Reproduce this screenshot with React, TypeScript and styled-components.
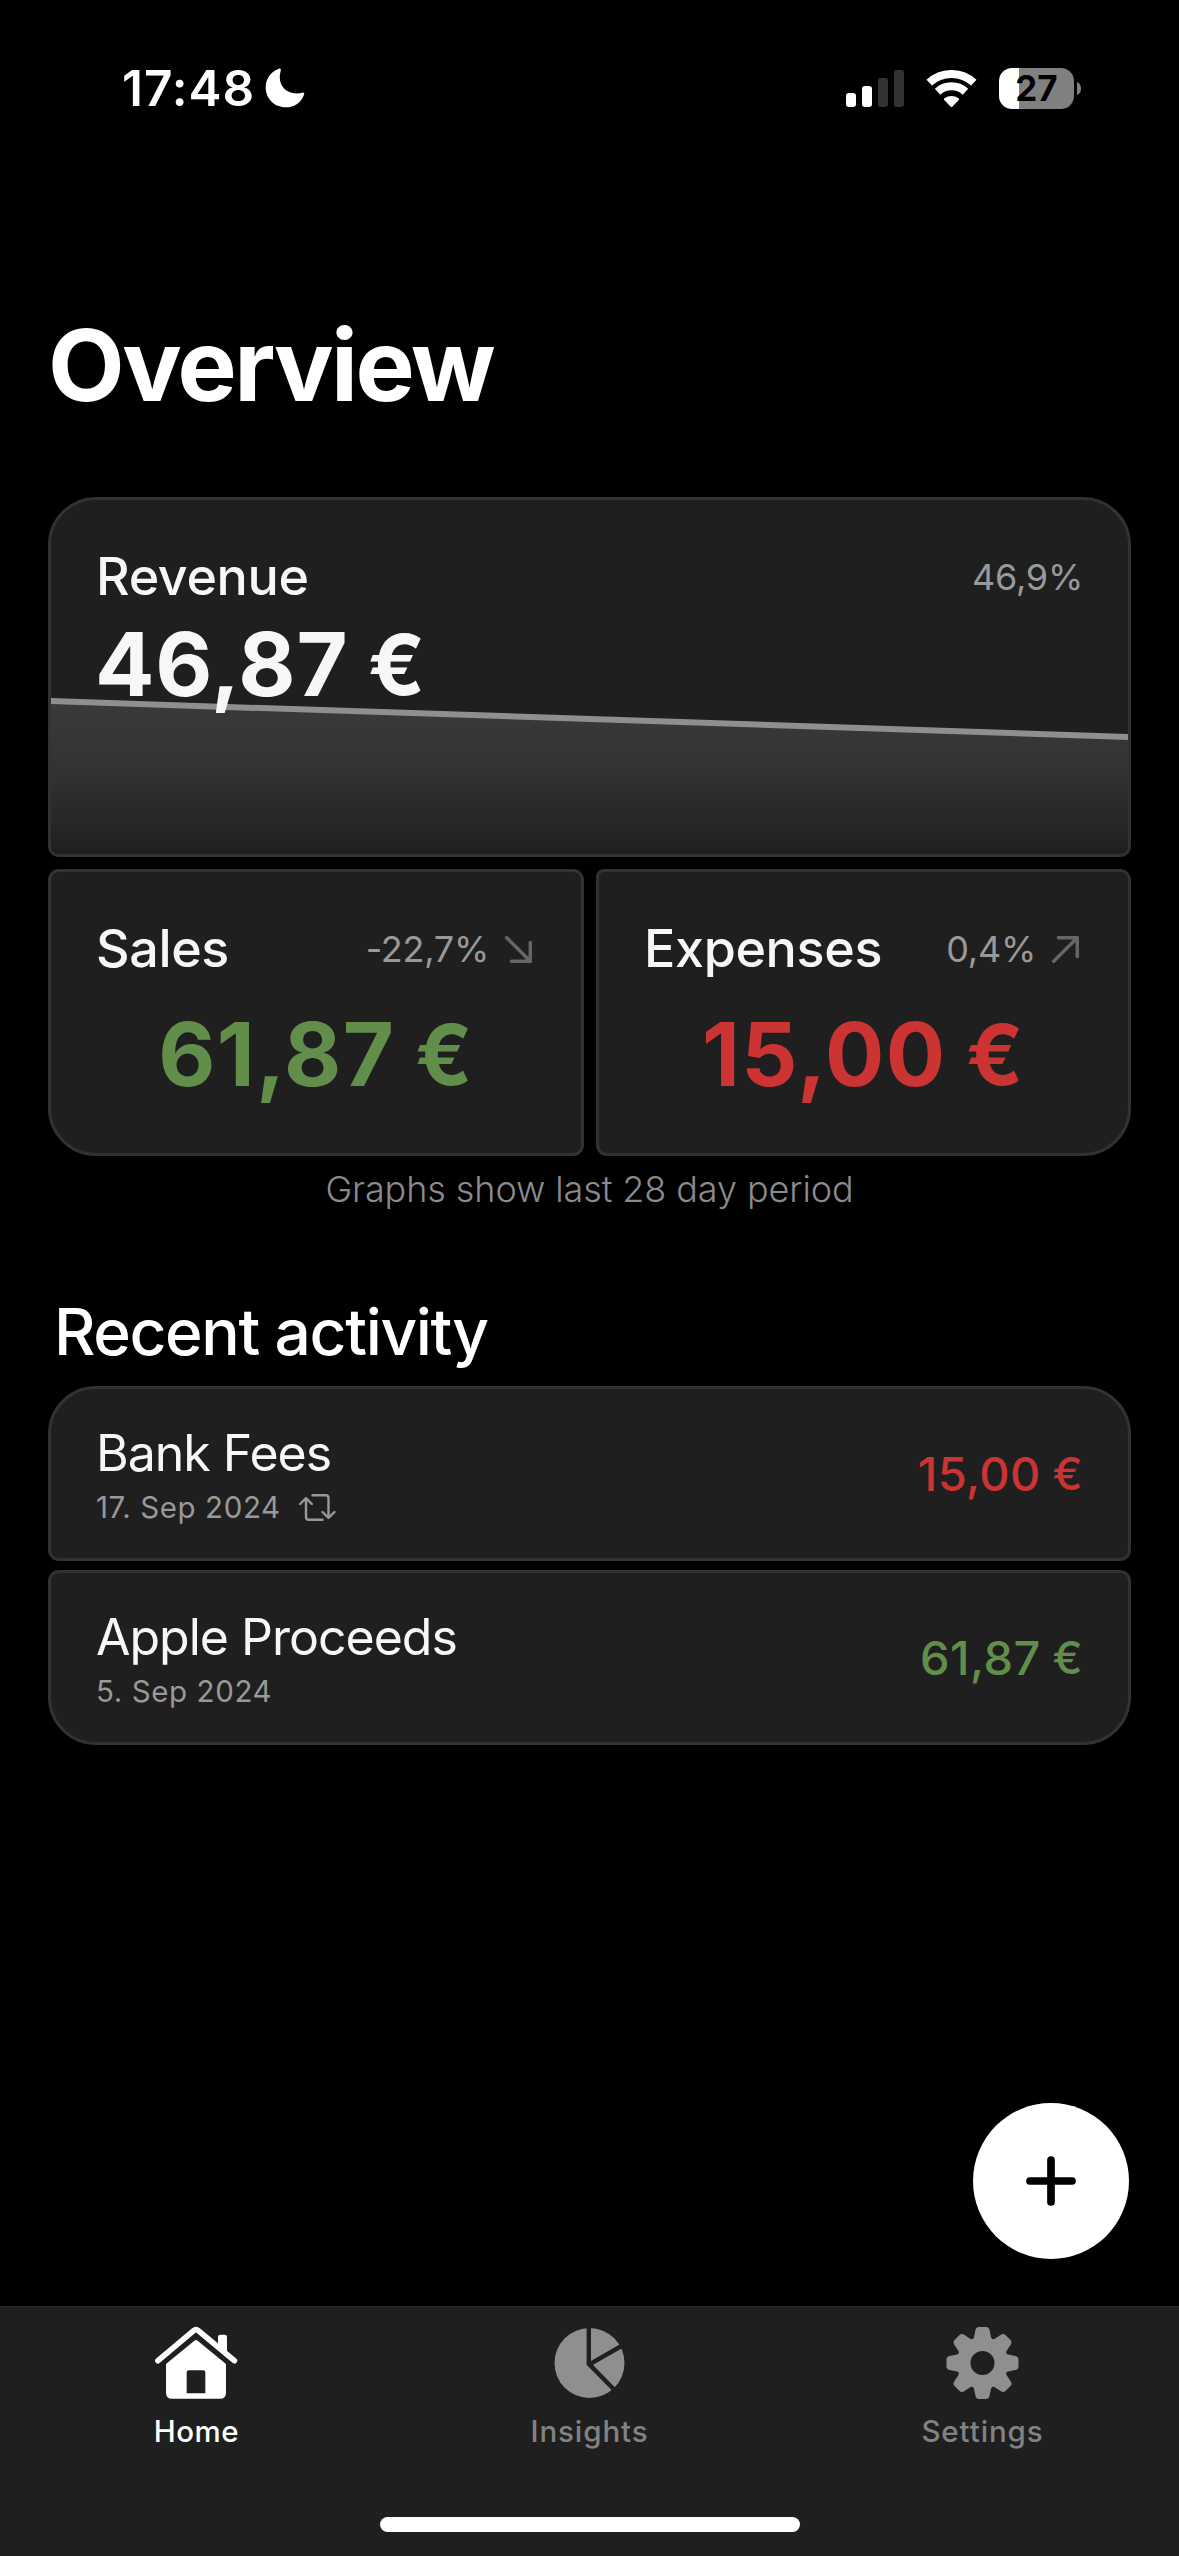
import React from "react";
import styled, { createGlobalStyle } from "styled-components";

const GlobalStyle = createGlobalStyle`
  * { box-sizing: border-box; }
  body {
    margin: 0;
    background: #000;
    color: #f7f7f7;
    font-family: Inter, "Liberation Sans", sans-serif;
  }
  svg { display: block; flex: none; }
`;

const POSITIVE = "#628e4b";
const NEGATIVE = "#cc3333";

const Screen = styled.div`
  display: flex;
  flex-direction: column;
  width: 1179px;
  height: 2556px;
  overflow: hidden;
  background: #000;
`;

const StatusBar = styled.header`
  display: flex;
  align-items: center;
  justify-content: space-between;
  height: 176px;
  padding: 0 98px 0 122px;
  color: #fff;
`;

const StatusGroup = styled.div<{ $gap: number }>`
  display: flex;
  align-items: center;
  gap: ${(p) => p.$gap}px;
`;

const Clock = styled.span`
  font-size: 49.5px;
  font-weight: 600;
  line-height: 60px;
  letter-spacing: 1px;
`;

const Battery = styled.div`
  display: flex;
  align-items: center;
  gap: 3px;
`;

const BatteryBody = styled.div<{ $level: number }>`
  display: flex;
  align-items: center;
  justify-content: center;
  width: 75px;
  height: 41px;
  border-radius: 13px;
  background: linear-gradient(90deg, #fff ${(p) => p.$level}%, #808080 ${(p) => p.$level}%);
  color: #000;
  font-size: 35px;
  font-weight: 700;
  line-height: 41px;
`;

const Content = styled.main`
  display: flex;
  flex-direction: column;
  flex: 1;
  padding: 139px 48px 47px;
`;

const PageTitle = styled.h1`
  margin: 0 0 82px;
  color: #fff;
  font-size: 99.5px;
  font-weight: 700;
  line-height: 100px;
  letter-spacing: -2.5px;
`;

const Cards = styled.section<{ $gap: number }>`
  display: flex;
  flex-direction: column;
  gap: ${(p) => p.$gap}px;
`;

const CardPair = styled.div`
  display: grid;
  grid-template-columns: 536px 535px;
  gap: 12px;
`;

const Card = styled.article<{ $height: number; $radius: string }>`
  position: relative;
  display: flex;
  flex-direction: column;
  height: ${(p) => p.$height}px;
  padding: 47px 45px 0;
  border: 3px solid #323234;
  border-radius: ${(p) => p.$radius};
  background: #1f1f1f;
  overflow: hidden;
`;

const CardHeader = styled.div`
  position: relative;
  display: flex;
  align-items: center;
  justify-content: space-between;
`;

const CardTitle = styled.h2`
  margin: 0;
  font-size: 52px;
  font-weight: 500;
  line-height: 60px;
  letter-spacing: -0.35px;
`;

const Change = styled.div<{ $trend?: boolean }>`
  display: flex;
  align-items: center;
  gap: 16px;
  padding-right: ${(p) => (p.$trend ? 4 : 0)}px;
  color: #999;
  font-size: 36px;
  line-height: 60px;
  letter-spacing: -0.25px;
`;

const RevenueAmount = styled.div`
  position: relative;
  margin: 12px 0 0 -1px;
  font-size: 88px;
  font-weight: 700;
  line-height: 90px;
  letter-spacing: 0.8px;
  white-space: pre;
`;

const Amount = styled.div<{ $color: string }>`
  margin-top: 30px;
  color: ${(p) => p.$color};
  font-size: 88px;
  font-weight: 700;
  line-height: 90px;
  letter-spacing: 1.3px;
  text-align: center;
  white-space: pre;
`;

const Euro = styled.span`
  position: relative;
  top: -0.012em;
  margin-left: -0.025em;
  font-size: 0.95em;
  line-height: 1;
`;

const ChartLayer = styled.svg`
  position: absolute;
  left: 0;
  bottom: 0;
`;

const Caption = styled.p`
  margin: 11px 0 0;
  color: #8a8a8f;
  font-size: 36px;
  font-weight: 300;
  line-height: 44px;
  letter-spacing: -0.1px;
  text-align: center;
`;

const SectionTitle = styled.h2`
  margin: 81px 0 14px;
  padding-left: 6px;
  color: #fff;
  font-size: 64px;
  font-weight: 500;
  line-height: 80px;
  letter-spacing: -1.35px;
`;

const Row = styled.article<{ $radius: string }>`
  display: flex;
  justify-content: space-between;
  height: 175px;
  padding: 34px 45px 0;
  border: 3px solid #323234;
  border-radius: ${(p) => p.$radius};
  background: #1f1f1f;
`;

const RowTitle = styled.h3`
  margin: 0;
  font-size: 50px;
  font-weight: 400;
  line-height: 60px;
  letter-spacing: -1px;
`;

const RowMeta = styled.div`
  display: flex;
  align-items: center;
  gap: 18px;
  margin-top: 4px;
  color: #999;
  font-size: 29.5px;
  line-height: 41px;
  letter-spacing: 0.6px;
`;

const RowAmount = styled.div<{ $color: string }>`
  color: ${(p) => p.$color};
  font-size: 47px;
  font-weight: 500;
  line-height: 102px;
  letter-spacing: 0.4px;
  white-space: pre;
`;

const AddButton = styled.button`
  display: flex;
  align-items: center;
  justify-content: center;
  align-self: flex-end;
  width: 156px;
  height: 156px;
  margin: auto 2px 0 0;
  padding: 0;
  border: 0;
  border-radius: 50%;
  background: #fff;
`;

const TabBar = styled.nav`
  display: flex;
  flex-direction: column;
  align-items: center;
  justify-content: space-between;
  height: 250px;
  padding-bottom: 24px;
  border-top: 1px solid #2b2b2b;
  background: #1f1f1f;
`;

const Tabs = styled.div`
  display: grid;
  grid-template-columns: repeat(3, 393px);
`;

const Tab = styled.div<{ $active?: boolean }>`
  display: flex;
  flex-direction: column;
  align-items: center;
  padding-top: 19px;
  color: ${(p) => (p.$active ? "#fff" : "#8f8f8f")};
`;

const TabLabel = styled.span<{ $active?: boolean }>`
  margin-top: 11px;
  color: ${(p) => (p.$active ? "#fff" : "#828282")};
  font-size: 29.5px;
  font-weight: 500;
  line-height: 40px;
  letter-spacing: ${(p) => (p.$active ? 0.5 : 0.9)}px;
`;

const HomeIndicator = styled.div`
  width: 420px;
  height: 15px;
  border-radius: 8px;
  background: #fff;
`;

const MoonIcon = () => (
  <svg width="40" height="40" viewBox="496 56 120 120" fill="currentColor">
    <path d="M536 59C512 68 498 90 498 114C498 148 524 174 558 174C584 174 605 159 613 136C615 131 613 129 608 130C568 141 530 112 543 65C545 59 542 56 536 59Z" />
  </svg>
);

const SignalIcon = () => (
  <svg width="58" height="37" viewBox="0 0 58 37">
    <rect x="0" y="23" width="10" height="14" rx="3" fill="#fff" />
    <rect x="16" y="16" width="10" height="21" rx="3" fill="#fff" />
    <rect x="32" y="8" width="10" height="29" rx="3" fill="#333" />
    <rect x="48" y="0" width="10" height="37" rx="3" fill="#333" />
  </svg>
);

const WifiIcon = () => (
  <svg width="51" height="37" viewBox="317.5 57 153 111" fill="none" stroke="#fff" strokeWidth="24">
    <path d="M327.1 95A99 99 0 0 1 460.9 95" />
    <path d="M352.1 122.3A62 62 0 0 1 435.9 122.3" />
    <path d="M397 166.5Q394 169.5 391 166.5L372 147Q370 144.5 373 142A35 35 0 0 1 415 142Q418 144.5 416 147Z" fill="#fff" stroke="none" />
  </svg>
);

const BatteryNub = () => (
  <svg width="4" height="13" viewBox="0 0 4 13">
    <path d="M0 0Q4 1.5 4 6.5T0 13Z" fill="#808080" />
  </svg>
);

const TrendIcon = ({ up }: { up?: boolean }) => (
  <svg
    width="27"
    height="27"
    viewBox="0 0 27 27"
    fill="none"
    stroke="#666"
    strokeWidth="3.5"
    strokeLinecap="round"
    strokeLinejoin="round"
  >
    <path d={up ? "M1.7 25.3L25.3 1.7M6.5 1.7H25.3V20.5" : "M1.7 1.7L25.3 25.3M25.3 6.5V25.3H6.5"} />
  </svg>
);

const RepeatIcon = () => (
  <svg
    width="37"
    height="28"
    viewBox="0 0 37 28"
    fill="none"
    stroke="#999"
    strokeWidth="2.4"
    strokeLinecap="round"
    strokeLinejoin="round"
  >
    <path d="M1.2 10L7 4.2L12.8 10M7 4.2V23Q7 25.8 9.8 25.8H23.5" />
    <path d="M23.5 18L29.5 23.8L35.5 18M29.5 23.8V4Q29.5 1.2 26.7 1.2H13.5" />
  </svg>
);

const PlusIcon = () => (
  <svg width="50" height="50" viewBox="0 0 50 50" stroke="#000" strokeWidth="7.7" strokeLinecap="round">
    <path d="M4 25H46M25 4V46" />
  </svg>
);

const HomeIcon = () => (
  <svg width="84" height="74" viewBox="164 108 252 222" fill="currentColor">
    <path
      d="M173 212L280 122Q287 116 294 122L402 212"
      fill="none"
      stroke="currentColor"
      strokeWidth="17"
      strokeLinecap="round"
    />
    <path d="M353 168V141Q353 134 360 134H373Q380 134 380 141V192Z" />
    <path
      fillRule="evenodd"
      d="M282 152Q287 148 292 152L377 222V308Q377 326 359 326H215Q197 326 197 308V222ZM265 241Q259 241 259 247V310H315V247Q315 241 309 241Z"
    />
  </svg>
);

const PieIcon = () => (
  <svg width="72" height="74" viewBox="-35.5 -37 72 74">
    <circle r="35" cx="0" cy="0" fill="currentColor" />
    <path d="M-0.7 -40V0.9L28 30" fill="none" stroke="#1f1f1f" strokeWidth="4.4" />
    <path d="M0 1.3L38 -20.5" stroke="#1f1f1f" strokeWidth="4.4" />
  </svg>
);

// One tooth pointing up, each point turned by 45° per tooth.
const gearPath = (): string => {
  const parts: string[] = [];
  for (let i = 0; i < 8; i++) {
    const a = (i * Math.PI) / 4;
    const p = (x: number, y: number) =>
      `${(x * Math.cos(a) - y * Math.sin(a)).toFixed(2)} ${(x * Math.sin(a) + y * Math.cos(a)).toFixed(2)}`;
    parts.push(
      `${i ? "L" : "M"}${p(-8.6, -25.4)}L${p(-7, -33)}Q${p(-6.3, -36)} ${p(-3.6, -36)}L${p(3.6, -36)}` +
        `Q${p(6.3, -36)} ${p(7, -33)}L${p(8.6, -25.4)}Q${p(9.5, -22.9)} ${p(11.88, -24.04)}`
    );
  }
  return parts.join("") + "ZM12 0A12 12 0 1 0 -12 0A12 12 0 1 0 12 0Z";
};

const GearIcon = () => (
  <svg width="74" height="74" viewBox="-36.5 -37 74 74">
    <path d={gearPath()} fill="currentColor" fillRule="evenodd" />
  </svg>
);

const RevenueChart = () => (
  <ChartLayer width="1077" height="160" viewBox="0 0 1077 160">
    <defs>
      <linearGradient id="area" x1="0" y1="0" x2="0" y2="1">
        <stop offset="0" stopColor="#3a3a3a" />
        <stop offset="0.45" stopColor="#333333" />
        <stop offset="1" stopColor="#1f1f1f" />
      </linearGradient>
    </defs>
    <path d="M0 7L1077 43V160H0Z" fill="url(#area)" />
    <path d="M-2 7L1079 43" stroke="#8f8f8f" strokeWidth="6" />
  </ChartLayer>
);

export default function App() {
  return (
    <Screen>
      <GlobalStyle />
      <StatusBar>
        <StatusGroup $gap={10}>
          <Clock>17:48</Clock>
          <MoonIcon />
        </StatusGroup>
        <StatusGroup $gap={22}>
          <SignalIcon />
          <WifiIcon />
          <Battery>
            <BatteryBody $level={27}>27</BatteryBody>
            <BatteryNub />
          </Battery>
        </StatusGroup>
      </StatusBar>

      <Content>
        <PageTitle>Overview</PageTitle>
        <Cards $gap={12}>
          <Card $height={360} $radius="48px 48px 11px 11px">
            <RevenueChart />
            <CardHeader>
              <CardTitle>Revenue</CardTitle>
              <Change>46,9%</Change>
            </CardHeader>
            <RevenueAmount>
              46,87 <Euro>€</Euro>
            </RevenueAmount>
          </Card>
          <CardPair>
            <Card $height={287} $radius="11px 11px 11px 48px">
              <CardHeader>
                <CardTitle>Sales</CardTitle>
                <Change $trend>
                  -22,7%
                  <TrendIcon />
                </Change>
              </CardHeader>
              <Amount $color={POSITIVE}>
                61,87 <Euro>€</Euro>
              </Amount>
            </Card>
            <Card $height={287} $radius="8px 11px 48px 11px">
              <CardHeader>
                <CardTitle>Expenses</CardTitle>
                <Change $trend>
                  0,4%
                  <TrendIcon up />
                </Change>
              </CardHeader>
              <Amount $color={NEGATIVE}>
                15,00 <Euro>€</Euro>
              </Amount>
            </Card>
          </CardPair>
        </Cards>
        <Caption>Graphs show last 28 day period</Caption>

        <SectionTitle>Recent activity</SectionTitle>
        <Cards $gap={9}>
          <Row $radius="48px 48px 11px 11px">
            <div>
              <RowTitle>Bank Fees</RowTitle>
              <RowMeta>
                17. Sep 2024
                <RepeatIcon />
              </RowMeta>
            </div>
            <RowAmount $color={NEGATIVE}>
              15,00 <Euro>€</Euro>
            </RowAmount>
          </Row>
          <Row $radius="11px 11px 48px 48px">
            <div>
              <RowTitle>Apple Proceeds</RowTitle>
              <RowMeta>5. Sep 2024</RowMeta>
            </div>
            <RowAmount $color={POSITIVE}>
              61,87 <Euro>€</Euro>
            </RowAmount>
          </Row>
        </Cards>
        <AddButton aria-label="Add">
          <PlusIcon />
        </AddButton>
      </Content>

      <TabBar>
        <Tabs>
          <Tab $active>
            <HomeIcon />
            <TabLabel $active>Home</TabLabel>
          </Tab>
          <Tab>
            <PieIcon />
            <TabLabel>Insights</TabLabel>
          </Tab>
          <Tab>
            <GearIcon />
            <TabLabel>Settings</TabLabel>
          </Tab>
        </Tabs>
        <HomeIndicator />
      </TabBar>
    </Screen>
  );
}
